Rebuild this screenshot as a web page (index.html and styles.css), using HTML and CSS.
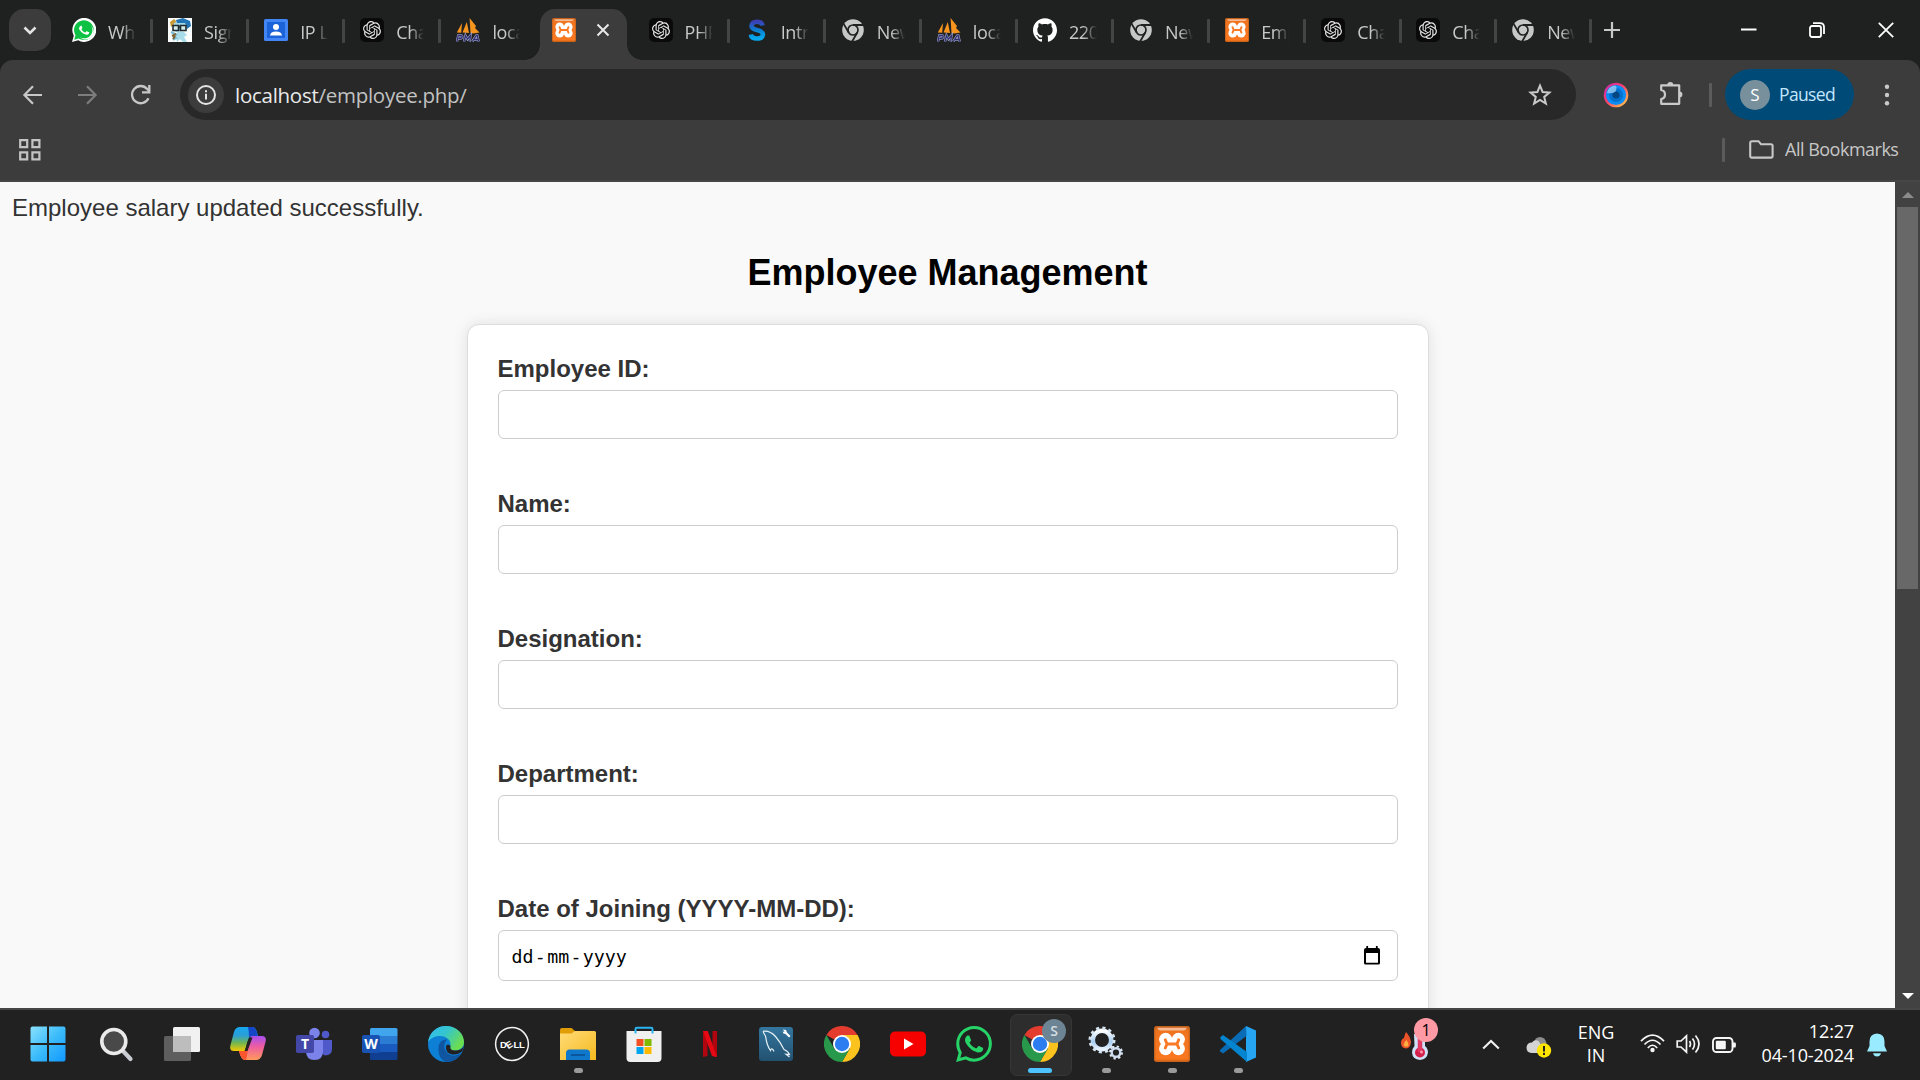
FILE: index.html
```html
<!DOCTYPE html>
<html lang="en">
<head>
<meta charset="utf-8">
<title>Employee Management</title>
<link rel="stylesheet" href="styles.css">
</head>
<body>
<svg class="defs" width="0" height="0" aria-hidden="true">
  <defs>
    <linearGradient id="gx" x1="0" y1="0" x2="0" y2="1"><stop offset="0" stop-color="#b45a18"/><stop offset=".12" stop-color="#ef7420"/><stop offset=".9" stop-color="#f9771f"/><stop offset="1" stop-color="#d9640f"/></linearGradient>
    <linearGradient id="gs" x1="0" y1="0" x2="0" y2="1"><stop offset="0" stop-color="#3b3fb5"/><stop offset=".5" stop-color="#0a80d0"/><stop offset="1" stop-color="#06a9ee"/></linearGradient>
    <linearGradient id="gw" x1="0" y1="0" x2="1" y2="1"><stop offset="0" stop-color="#8be1fd"/><stop offset=".5" stop-color="#3cbcfa"/><stop offset="1" stop-color="#1199ff"/></linearGradient>
    <linearGradient id="gf" x1="0" y1="0" x2="1" y2="1"><stop offset="0" stop-color="#ffdc78"/><stop offset="1" stop-color="#f6b91e"/></linearGradient>
    <linearGradient id="gm" x1="0" y1="0" x2="0" y2="1"><stop offset="0" stop-color="#33769f"/><stop offset="1" stop-color="#225170"/></linearGradient>
    <linearGradient id="gc1" x1="0" y1="0" x2="0" y2="1"><stop offset="0" stop-color="#15a6ee"/><stop offset=".35" stop-color="#2b9fd8"/><stop offset=".65" stop-color="#6db555"/><stop offset="1" stop-color="#f4c900"/></linearGradient>
    <linearGradient id="gc2" x1="0" y1="0" x2="0" y2="1"><stop offset="0" stop-color="#a84ff0"/><stop offset=".45" stop-color="#ef5ea0"/><stop offset="1" stop-color="#ff9a5a"/></linearGradient>
    <linearGradient id="ge" x1="0" y1="0" x2="1" y2=".5"><stop offset="0" stop-color="#35bdf0"/><stop offset=".5" stop-color="#34c5cf"/><stop offset="1" stop-color="#6bdd50"/></linearGradient>
    <linearGradient id="gg" x1="0" y1="0" x2="0" y2="1"><stop offset="0" stop-color="#fff"/><stop offset=".6" stop-color="#a5cdf0"/><stop offset="1" stop-color="#e8f2ff"/></linearGradient>
    <linearGradient id="geye" x1="0" y1="0" x2="1" y2="1"><stop offset="0" stop-color="#c42ab0"/><stop offset=".45" stop-color="#ff3d6a"/><stop offset="1" stop-color="#ffd34a"/></linearGradient>
  </defs>
  <symbol id="whatsapp" viewBox="0 0 24 24"><path d="M17.472 14.382c-.297-.149-1.758-.867-2.03-.967-.273-.099-.471-.148-.67.15-.197.297-.767.966-.94 1.164-.173.199-.347.223-.644.075-.297-.15-1.255-.463-2.39-1.475-.883-.788-1.48-1.761-1.653-2.059-.173-.297-.018-.458.13-.606.134-.133.298-.347.446-.52.149-.174.198-.298.298-.497.099-.198.05-.371-.025-.52-.075-.149-.669-1.612-.916-2.207-.242-.579-.487-.5-.669-.51-.173-.008-.371-.01-.57-.01-.198 0-.52.074-.792.372-.272.297-1.04 1.016-1.04 2.479 0 1.462 1.065 2.875 1.213 3.074.149.198 2.096 3.2 5.077 4.487.709.306 1.262.489 1.694.625.712.227 1.36.195 1.871.118.571-.085 1.758-.719 2.006-1.413.248-.694.248-1.289.173-1.413-.074-.124-.272-.198-.57-.347m-5.421 7.403h-.004a9.87 9.87 0 01-5.031-1.378l-.361-.214-3.741.982.998-3.648-.235-.374a9.86 9.86 0 01-1.51-5.26c.001-5.45 4.436-9.884 9.888-9.884 2.64 0 5.122 1.03 6.988 2.898a9.825 9.825 0 012.893 6.994c-.003 5.45-4.437 9.884-9.885 9.884m8.413-18.297A11.815 11.815 0 0012.05 0C5.495 0 .16 5.335.157 11.892c0 2.096.547 4.142 1.588 5.945L.057 24l6.305-1.654a11.882 11.882 0 005.683 1.448h.005c6.554 0 11.89-5.335 11.893-11.893a11.821 11.821 0 00-3.48-8.413z"/></symbol>
  <symbol id="gpt" viewBox="0 0 24 24"><rect width="24" height="24" rx="5" fill="#0a0a0a"/><path transform="translate(3 3) scale(.75)" fill="#e4e4e4" d="M22.2819 9.8211a5.9847 5.9847 0 0 0-.5157-4.9108 6.0462 6.0462 0 0 0-6.5098-2.9A6.0651 6.0651 0 0 0 4.9807 4.1818a5.9847 5.9847 0 0 0-3.9977 2.9 6.0462 6.0462 0 0 0 .7427 7.0966 5.98 5.98 0 0 0 .511 4.9107 6.051 6.051 0 0 0 6.5146 2.9001A5.9847 5.9847 0 0 0 13.2599 24a6.0557 6.0557 0 0 0 5.7718-4.2058 5.9894 5.9894 0 0 0 3.9977-2.9001 6.0557 6.0557 0 0 0-.7475-7.0729zm-9.022 12.6081a4.4755 4.4755 0 0 1-2.8764-1.0408l.1419-.0804 4.7783-2.7582a.7948.7948 0 0 0 .3927-.6813v-6.7369l2.02 1.1686a.071.071 0 0 1 .038.052v5.5826a4.504 4.504 0 0 1-4.4945 4.4944zm-9.6607-4.1254a4.4708 4.4708 0 0 1-.5346-3.0137l.142.0852 4.783 2.7582a.7712.7712 0 0 0 .7806 0l5.8428-3.3685v2.3324a.0804.0804 0 0 1-.0332.0615L9.74 19.9502a4.4992 4.4992 0 0 1-6.1408-1.6464zM2.3408 7.8956a4.485 4.485 0 0 1 2.3655-1.9728V11.6a.7664.7664 0 0 0 .3879.6765l5.8144 3.3543-2.0201 1.1685a.0757.0757 0 0 1-.071 0l-4.8303-2.7865A4.504 4.504 0 0 1 2.3408 7.872zm16.5963 3.8558L13.1038 8.364 15.1192 7.2a.0757.0757 0 0 1 .071 0l4.8303 2.7913a4.4944 4.4944 0 0 1-.6765 8.1042v-5.6772a.79.79 0 0 0-.407-.667zm2.0107-3.0231l-.142-.0852-4.7735-2.7818a.7759.7759 0 0 0-.7854 0L9.409 9.2297V6.8974a.0662.0662 0 0 1 .0284-.0615l4.8303-2.7866a4.4992 4.4992 0 0 1 6.6802 4.66zM8.3065 12.863l-2.02-1.1638a.0804.0804 0 0 1-.038-.0567V6.0742a4.4992 4.4992 0 0 1 7.3757-3.4537l-.142.0805L8.704 5.459a.7948.7948 0 0 0-.3927.6813zm1.0976-2.3654l2.602-1.4998 2.6069 1.4998v2.9994l-2.5974 1.4997-2.6067-1.4997Z"/></symbol>
  <symbol id="pma" viewBox="0 0 24 24"><path fill="#f7941e" d="M13.6 0 L20 8 L19 10 L23.5 14.5 L17 15.5 L14.5 15Z M10.8 4 L13 15 L6.5 14.6Z M6 5 L5.2 14.8 L.8 14.6Z"/><path d="M1 23.5 2.2 17.500h3q1.600.3.8 1.900T2.500 20.600M8 23.5 9.500 17.500l2 3.700L14.500 17.500l-.8 6M16.300 23.500 20.300 17.500h1l1.400 6M18.300 21.500h3.600" fill="none" stroke="#aeb2dc" stroke-width="2.300"/><path d="M1 23.5 2.2 17.500h3q1.600.3.8 1.900T2.500 20.600M8 23.5 9.500 17.500l2 3.700L14.500 17.500l-.8 6M16.300 23.500 20.300 17.500h1l1.400 6M18.300 21.500h3.600" fill="none" stroke="#30326f" stroke-width="1.300"/></symbol>
  <symbol id="xampp" viewBox="0 0 36 36"><rect width="36" height="36" rx="3" fill="url(#gx)"/><rect x=".7" y=".7" width="34.6" height="34.6" rx="2.5" fill="none" stroke="#c2621c" stroke-width="1.2"/><path d="M3 1.8H33Q32 4.5 29 4.5H7Q4 4.5 3 1.8Z" fill="#f6bb94"/><g fill="#fff"><circle cx="11.600" cy="13.300" r="6.500"/><circle cx="24.400" cy="13.300" r="6.500"/><circle cx="11.600" cy="22.700" r="6.500"/><circle cx="24.400" cy="22.700" r="6.500"/><rect x="7" y="12" width="22" height="12"/></g><path d="M11.300 13.800 13 18 11.300 22M24.700 13.800 23 18 24.700 22M13 18H23" fill="none" stroke="#fb7a25" stroke-width="2.900" stroke-linecap="round"/></symbol>
  <symbol id="newtab" viewBox="0 0 24 24"><circle cx="12" cy="12" r="10.8" fill="#c6c8c7"/><circle cx="12" cy="12" r="5" fill="none" stroke="#202221" stroke-width="1.7"/><path d="M12 7H22.3M7.7 14.5 2.5 5.6M16.3 14.5 11.1 23.5" stroke="#202221" stroke-width="1.8"/></symbol>
  <symbol id="chrome" viewBox="0 0 36 36"><path fill="#e33b2e" d="M18 18 2.4 9A18 18 0 0 1 33.6 9Z"/><path fill="#fcc31e" d="M18 9H33.6A18 18 0 0 1 18 36L25.8 22.5Z"/><path fill="#28994a" d="M18 36A18 18 0 0 1 2.4 9L10.2 22.5 18 27 25.8 22.5Z"/><circle cx="18" cy="18" r="9" fill="#fff"/><circle cx="18" cy="18" r="7.2" fill="#2b7df0"/></symbol>
  <symbol id="github" viewBox="0 0 24 24"><path fill="#fff" d="M12 .297c-6.63 0-12 5.373-12 12 0 5.303 3.438 9.8 8.205 11.385.6.113.82-.258.82-.577 0-.285-.01-1.04-.015-2.04-3.338.724-4.042-1.61-4.042-1.61C4.422 18.07 3.633 17.7 3.633 17.7c-1.087-.744.084-.729.084-.729 1.205.084 1.838 1.236 1.838 1.236 1.07 1.835 2.809 1.305 3.495.998.108-.776.417-1.305.76-1.605-2.665-.3-5.466-1.332-5.466-5.93 0-1.31.465-2.38 1.235-3.22-.135-.303-.54-1.523.105-3.176 0 0 1.005-.322 3.3 1.23.96-.267 1.98-.399 3-.405 1.02.006 2.04.138 3 .405 2.28-1.552 3.285-1.23 3.285-1.23.645 1.653.24 2.873.12 3.176.765.84 1.23 1.91 1.23 3.22 0 4.61-2.805 5.625-5.475 5.92.42.36.81 1.096.81 2.22 0 1.606-.015 2.896-.015 3.286 0 .315.21.69.825.57C20.565 22.092 24 17.592 24 12.297c0-6.627-5.373-12-12-12"/></symbol>
</svg>

<header class="tabstrip">
  <button class="tabsearch" aria-label="Search tabs"><svg width="14" height="9" viewBox="0 0 14 9"><path d="M1.5 1.5 7 7 12.5 1.5" fill="none" stroke="#e3e3e3" stroke-width="2.6"/></svg></button>
  <nav class="tabs">
    <div class="tab"><svg class="fav" viewBox="0 0 24 24"><path d="M0 24 1.8 17.8A12 12 0 1 1 6.2 22.3Z" fill="#fff"/><path d="M2.2 21.8 3.5 17.3A9.9 9.9 0 1 1 6.8 20.6Z" fill="#0cc143"/><use href="#whatsapp" x="1.8" y="1.8" width="20.4" height="20.4" fill="#fff" clip-path="circle(8px at 12px 12px)"/></svg><span>Wh</span></div>
    <div class="tab"><svg class="fav" viewBox="0 0 24 24"><rect width="24" height="24" fill="#fbfdfd"/><path d="M8 2 15 0 22 3 23 8 19 11 17 6 9 6Z" fill="#2375b5"/><path d="M2 4 6 1 8 3 7 7 3 9Z" fill="#c99a38"/><path d="M6 5 17 5 19 9 18 13 8 14 5 11Z" fill="#9fd9ea"/><path d="M5 7.5h5.5v5H5ZM12.5 7.5H18v5h-5.5ZM10.5 9h2" fill="#d4ebec" stroke="#1d292d" stroke-width="1.6"/><path d="M9 14h7l3 3-3 2 3 5h-4l-3-3-3 3-1-5Z" fill="#a9dce9"/><path d="M3 14 9 17M6 18 8 20 5 22" stroke="#78bed8" stroke-width="2"/><path d="M4 18 8 16M5 21 7 18" stroke="#7d6234" stroke-width="2"/></svg><span>Sign</span></div>
    <div class="tab"><svg class="fav" viewBox="0 0 24 24"><rect y="1" width="24" height="22" rx="1.5" fill="#4285f4"/><rect x="3" y="4" width="18" height="16" fill="#1a63d8"/><circle cx="12" cy="9" r="3" fill="#fff"/><path d="M6 17.5Q6.5 13.5 12 13.5T18 17.5Z" fill="#fff"/></svg><span>IP L</span></div>
    <div class="tab"><svg class="fav"><use href="#gpt"/></svg><span>Cha</span></div>
    <div class="tab nosep"><svg class="fav"><use href="#pma"/></svg><span>loca</span></div>
    <div class="tab active nosep"><svg class="fav"><use href="#xampp"/></svg><svg class="close" width="14" height="14" viewBox="0 0 14 14"><path d="M1.5 1.5 12.5 12.5M12.5 1.5 1.5 12.5" stroke="#e8e8e8" stroke-width="2"/></svg></div>
    <div class="tab"><svg class="fav"><use href="#gpt"/></svg><span>PHP</span></div>
    <div class="tab"><svg class="fav" viewBox="0 0 24 24"><path d="M17.5 7.5Q17 3.8 12 3.8T6.5 7.8Q6.5 10.8 12 12T18 16.5Q17.5 20.5 12 20.5T5.8 16.5" fill="none" stroke="url(#gs)" stroke-width="4.6"/></svg><span>Intr</span></div>
    <div class="tab"><svg class="fav"><use href="#newtab"/></svg><span>New</span></div>
    <div class="tab"><svg class="fav"><use href="#pma"/></svg><span>loca</span></div>
    <div class="tab"><svg class="fav"><use href="#github"/></svg><span>220</span></div>
    <div class="tab"><svg class="fav"><use href="#newtab"/></svg><span>New</span></div>
    <div class="tab"><svg class="fav"><use href="#xampp"/></svg><span>Emp</span></div>
    <div class="tab late"><svg class="fav"><use href="#gpt"/></svg><span>Cha</span></div>
    <div class="tab late"><svg class="fav"><use href="#gpt"/></svg><span>Cha</span></div>
    <div class="tab late"><svg class="fav"><use href="#newtab"/></svg><span>New</span></div>
  </nav>
  <svg class="plus" width="16" height="16" viewBox="0 0 16 16"><path d="M8 0V16M0 8H16" stroke="#c8c8c8" stroke-width="2.2"/></svg>
  <div class="winbtns">
    <svg width="16" height="16" viewBox="0 0 16 16"><path d="M0 7.5H15.5" stroke="#fff" stroke-width="2"/></svg>
    <svg width="16" height="16" viewBox="0 0 16 16"><rect x="1" y="4" width="11" height="11" rx="2" fill="none" stroke="#fff" stroke-width="1.8"/><path d="M4 1.2H11Q15 1.2 15 5V12" fill="none" stroke="#fff" stroke-width="1.8"/></svg>
    <svg width="16" height="16" viewBox="0 0 16 16"><path d="M.8.8 15.2 15.2M15.2.8.8 15.2" stroke="#fff" stroke-width="1.8"/></svg>
  </div>
</header>

<div class="chromebar">
  <div class="toolbar">
    <svg class="nav" viewBox="0 0 24 24"><path d="M21 12H4M12 3.2 3.4 12 12 20.8" fill="none" stroke="#c7c7c7" stroke-width="2.2"/></svg>
    <svg class="nav" viewBox="0 0 24 24"><path d="M3 12H20M12 3.2 20.6 12 12 20.8" fill="none" stroke="#7d7d7d" stroke-width="2.2"/></svg>
    <svg class="nav" viewBox="0 0 24 24"><path d="M19.5 15.2A8.6 8.6 0 1 1 18.2 6L20.4 8.6" fill="none" stroke="#c7c7c7" stroke-width="2.3"/><path d="M20.3 2V9.3H13" fill="none" stroke="#c7c7c7" stroke-width="2.3"/></svg>
    <div class="omnibox">
      <div class="chip"><svg width="22" height="22" viewBox="0 0 22 22"><circle cx="11" cy="11" r="9" fill="none" stroke="#e3e3e3" stroke-width="2"/><path d="M11 9.8V15.6M11 6.2V8.2" stroke="#e3e3e3" stroke-width="2"/></svg></div>
      <div class="url"><b>localhost</b>/employee.php/</div>
      <svg class="star" width="24" height="24" viewBox="0 0 24 24"><path d="M12 2.6 14.6 9 21.4 9.5 16.2 13.9 17.9 20.7 12 17 6.1 20.7 7.8 13.9 2.6 9.5 9.4 9Z" fill="none" stroke="#c9c9c9" stroke-width="2"/></svg>
    </div>
    <svg class="ext" viewBox="0 0 26 26"><circle cx="13" cy="13" r="11.2" fill="#0a8df5" stroke="url(#geye)" stroke-width="2.2"/><circle cx="13" cy="13" r="7" fill="#0570cd"/><circle cx="13" cy="13" r="3.6" fill="#044682"/><path d="M4 11A9.4 9.4 0 0 1 12 3.6Q14.5 5 13 8.5T4 11Z" fill="#9ccdf2" opacity=".8"/></svg>
    <svg class="puzzle" viewBox="0 0 26 26"><path d="M2.2 4.3H20.2V22.8H2.2V18Q6 17.3 6 13.5T2.2 9Z" fill="none" stroke="#c9c9c9" stroke-width="2.2" stroke-linejoin="round"/><path d="M8.3 4A3 3 0 0 1 14.3 4ZM20.4 10.5A3 3 0 0 1 20.4 16.5Z" fill="#c9c9c9"/></svg>
    <i class="bar"></i>
    <div class="profile"><span class="avatar">S</span><span class="paused">Paused</span></div>
    <svg class="dots" width="6" height="22" viewBox="0 0 6 22"><g fill="#c9c9c9"><circle cx="3" cy="2.7" r="2.2"/><circle cx="3" cy="11" r="2.2"/><circle cx="3" cy="19.3" r="2.2"/></g></svg>
  </div>
  <div class="bookmarks">
    <svg width="22" height="22" viewBox="0 0 22 22"><g fill="none" stroke="#c4c4c4" stroke-width="2.2"><path d="M1.2 1.2H8.2V8.2H1.2ZM13.4 1.2H20.4V8.2H13.4ZM1.2 13.4H8.2V20.4H1.2ZM13.4 13.4H20.4V20.4H13.4Z"/></g></svg>
    <i class="bar"></i>
    <svg class="folder" width="25" height="19" viewBox="0 0 25 19"><path d="M3 1.2H9.5L12 4.2H22Q23.6 4.2 23.6 5.8V16Q23.6 17.6 22 17.6H2.8Q1.2 17.6 1.2 16V3Q1.2 1.2 3 1.2Z" fill="none" stroke="#c7c7c7" stroke-width="2.1"/></svg>
    <span class="all">All Bookmarks</span>
  </div>
</div>

<div class="viewport">
  <main class="page">
    <div class="message">Employee salary updated successfully.</div>
    <h2>Employee Management</h2>
    <form class="card">
      <label for="eid">Employee ID:</label><input id="eid" type="text">
      <label for="name">Name:</label><input id="name" type="text">
      <label for="des">Designation:</label><input id="des" type="text">
      <label for="dep">Department:</label><input id="dep" type="text">
      <label>Date of Joining (YYYY-MM-DD):</label>
      <div class="date"><span class="dmy"><span>dd</span><span>-</span><span>mm</span><span>-</span><span>yyyy</span></span><svg width="18" height="19" viewBox="0 0 18 19"><path d="M1 4Q1 2 3 2H15Q17 2 17 4V17Q17 18.5 15.5 18.5H2.5Q1 18.5 1 17ZM3 7V16.7H15V7Z" fill="#000" fill-rule="evenodd"/><path d="M4.2 0V3M13.8 0V3" stroke="#000" stroke-width="1.8"/></svg></div>
    </form>
  </main>
  <aside class="scroll">
    <i class="up"></i><i class="thumb"></i><i class="down"></i>
  </aside>
</div>

<footer class="taskbar">
  <div class="apps">
    <div class="app start"><svg viewBox="0 0 36 36"><g fill="url(#gw)"><path d="M.5 2.5Q.5.5 2.5.5H17V17H.5ZM19 .5H33.5Q35.5.5 35.5 2.5V17H19ZM.5 19H17V35.5H2.5Q.5 35.5.5 33.5ZM19 19H35.5V33.5Q35.5 35.5 33.5 35.5H19Z"/></g></svg></div>
    <div class="app"><svg viewBox="0 0 36 36"><path d="M25.5 25.5 32.5 33" stroke="#c9ccd2" stroke-width="4.2" stroke-linecap="round"/><circle cx="15.8" cy="15.5" r="12" fill="#494949" stroke="#eaeaea" stroke-width="3.6"/></svg></div>
    <div class="app"><svg viewBox="0 0 36 36"><rect x="9" y="1" width="27" height="25" rx="1.5" fill="#f1f1f1"/><rect x="0" y="10" width="27" height="25" rx="1.5" fill="#5e5e5e"/><rect x="9" y="10" width="18" height="16" fill="#bdbdbd"/></svg></div>
    <div class="app"><svg viewBox="0 0 36 36"><path d="M10 1H23Q26 1 28 10H22Q19 10 17 17L15 25H4Q-1 25 .5 19L4 6Q5.5 1 10 1Z" fill="url(#gc1)"/><path d="M18 1H23Q26 1 27.8 10H23Q20 10 19 12Q19 5 18 1Z" fill="#1546c8"/><path d="M26 34H15Q11 34 9 25H14Q17 25 19 18L21 10H32Q37 10 35.5 16L32 29Q30.5 34 26 34Z" fill="url(#gc2)"/><path d="M9 25H14Q17 25 18 22 17 31 16 34 11 34 9 25Z" fill="#f9562f"/><path d="M19 11.5H22.5L17.5 25H14.5Q17 19 19 11.5Z" fill="#222"/></svg></div>
    <div class="app"><svg viewBox="0 0 36 36"><circle cx="29.5" cy="8.5" r="3.8" fill="#5059c9"/><path d="M24 14H36V23Q36 29 29 29.5L25 27Z" fill="#5059c9"/><circle cx="18.5" cy="7" r="5.3" fill="#7b83eb"/><path d="M10 14H27V25Q27 34 18.5 34T10 25Z" fill="#7b83eb"/><rect x="0" y="9" width="18" height="18" rx="1.8" fill="#4247a8"/><text x="9" y="23" text-anchor="middle" class="mark">T</text></svg></div>
    <div class="app"><svg viewBox="0 0 36 36"><path d="M9.5 2H34Q35.5 2 35.5 3.500V10H8V3.500Q8 2 9.500 2Z" fill="#41a5ee"/><path d="M8 10H35.500V18H8Z" fill="#2b7cd3"/><path d="M8 18H35.500V26H8Z" fill="#185abd"/><path d="M8 26H35.500V32.500Q35.500 34 34 34H9.500Q8 34 8 32.500Z" fill="#103f91"/><rect x="0" y="9" width="18" height="18" rx="1.8" fill="#1853b4"/><text x="9" y="23" text-anchor="middle" class="mark">W</text></svg></div>
    <div class="app"><svg viewBox="0 0 36 36"><circle cx="18" cy="18" r="18" fill="#0d7fd4"/><path d="M0 17C1 6 9 0 18 0 28 0 36 7 36 16 36 22 31 25 26 24.500 22 24 21 22.500 22.500 20 23.500 14 18 9.500 11 10 5 10.500 1.500 13 0 17Z" fill="url(#ge)"/><path d="M10.500 24C10 17 14 13 19 13.500 13 20 18 30 26 29.500 29 29.500 31 28.500 33.500 27 30 33.500 24 36 18.500 36 14 35 10.500 30 10.500 24Z" fill="#0f55a0"/><path d="M22.500 20Q19.500 17 18 20 17 27 24.500 28.500 30 29 34 25.500L36 20Q33 25 26 24.500 21.500 24 22.500 20Z" fill="#212121"/></svg></div>
    <div class="app"><svg viewBox="0 0 36 36"><circle cx="18" cy="18" r="16.400" fill="none" stroke="#f2f2f2" stroke-width="1.500"/><text x="9.500" y="21.800" text-anchor="middle" class="dell">D</text><text transform="translate(17 21.500) rotate(-32)" text-anchor="middle" class="dell">E</text><text x="22.500" y="21.800" text-anchor="middle" class="dell">L</text><text x="28" y="21.800" text-anchor="middle" class="dell">L</text></svg></div>
    <div class="app"><svg viewBox="0 0 36 36"><path d="M0 4Q0 2 2 2H11.500L15 5V9H0Z" fill="#e09d08"/><path d="M0 7.500H11.500L15 5H34.500Q36 5 36 6.500V34H0Z" fill="url(#gf)"/><path d="M6 34V27Q6 23.500 9.500 23.500H26.500Q30 23.500 30 27V34Z" fill="#0f78cb"/><path d="M11 29H25" stroke="#0a4d90" stroke-width="1.600"/></svg><i class="run"></i></div>
    <div class="app store"><svg viewBox="0 0 36 36"><path d="M9.500 8V3Q9.500 1.800 10.700 1.800H25.300Q26.500 1.800 26.500 3V8" fill="none" stroke="#2ab4f1" stroke-width="2"/><path d="M.500 5H35.500V32Q35.500 36 31.500 36H4.500Q.500 36 .500 32Z" fill="#f0f0f0"/><path d="M9.500 5V7.500M26.500 5V7.500" stroke="#2ab4f1" stroke-width="2"/><path d="M10.500 13H17.500V20H10.500Z" fill="#f25022"/><path d="M18.500 13H25.500V20H18.500Z" fill="#7fba00"/><path d="M10.500 21H17.500V28H10.500Z" fill="#00a4ef"/><path d="M18.500 21H25.500V28H18.500Z" fill="#ffb900"/></svg></div>
    <div class="app"><svg viewBox="0 0 36 36"><path d="M11 5H15.500V30L11 31ZM20.500 5H25V31L20.500 30Z" fill="#b1060f"/><path d="M11 5H15.800L25 31 20 30Z" fill="#e50914"/></svg></div>
    <div class="app"><svg viewBox="0 0 36 36"><rect x="1" y="1" width="34" height="34" rx="3" fill="url(#gm)"/><path d="M16 25.500C14.500 22 13 22.500 12.500 24.500 8.500 19 8.500 14.500 7.500 10 5 6.500 5 5 6 5.200 10 5 14 6.500 17.500 10.500 21.500 15 24 19.500 26 23.500 28.500 24.500 30.500 26 31.500 28.500L28 28.200 31.500 31" fill="none" stroke="#e6f0f5" stroke-width="1.200"/><path d="M25 3.500 28 4 29 6.500 32.500 10 31 11.500 27.500 8 25.500 7.500 24.500 5.500 26.500 6Z" fill="#fff"/></svg></div>
    <div class="app"><svg><use href="#chrome"/></svg></div>
    <div class="app"><svg viewBox="0 0 36 36"><rect x="0" y="5.500" width="36" height="25" rx="5" fill="#f60000"/><path d="M14 12.500 23.500 18 14 23.500Z" fill="#fff"/></svg></div>
    <div class="app"><svg fill="#25d366"><use href="#whatsapp"/></svg></div>
    <div class="app current"><svg><use href="#chrome"/></svg><b class="badge">S</b><i class="run wide"></i></div>
    <div class="app"><svg viewBox="0 0 36 36"><circle cx="14" cy="14" r="9.200" fill="none" stroke="url(#gg)" stroke-width="4.500"/><circle cx="14" cy="14" r="12" fill="none" stroke="#d4e4f0" stroke-width="3" stroke-dasharray="3.100 3.183"/><circle cx="28" cy="26.500" r="4.300" fill="none" stroke="#cfdcf0" stroke-width="2.400"/><circle cx="28" cy="26.500" r="6" fill="none" stroke="#dde8f5" stroke-width="2" stroke-dasharray="2.300 2.400"/></svg><i class="run"></i></div>
    <div class="app"><svg><use href="#xampp"/></svg><i class="run"></i></div>
    <div class="app"><svg viewBox="0 0 36 36"><path d="M26 0 36 4.500V31.500L26 36Z" fill="#25a5f2"/><path d="M26 0 0 24V25.500L3 27.500 26.500 10Z" fill="#0a6cb4"/><path d="M0 11.500 3 9 27 26V36L1 13.500Z" fill="#0585cf"/></svg><i class="run"></i></div>
  </div>
  <div class="weather"><svg width="40" height="46" viewBox="0 0 40 46"><path d="M6 14Q10 18 11 24 10.500 30 6 30.500 1 30 1 25 1 21 4 20 4.500 17 6 14Z" fill="#ec5329"/><path d="M6.500 22Q9 25 8.500 28 5 30 3.500 27 4 24 6.500 22Z" fill="#ffae42"/><path d="M14 16H25V28Q28 30.500 28 34.500 27 41.500 20 42 12.500 41.500 12 34.500 12 30.500 14.500 28Z" fill="#cfe0f7"/><circle cx="20" cy="34.500" r="5" fill="#d51f4c"/><path d="M20 20V34" stroke="#e23a62" stroke-width="4.500"/><circle cx="21.500" cy="34" r="1.500" fill="#ff97ad"/></svg><b>1</b></div>
  <svg class="caret" width="18" height="11" viewBox="0 0 18 11"><path d="M1.200 9.500 9 2 16.800 9.500" fill="none" stroke="#f2f2f2" stroke-width="2.100"/></svg>
  <svg class="cloud" width="26" height="24" viewBox="0 0 26 24"><path d="M8 8Q9 2 14 2 19 2 20.500 8L18 13Z" fill="#8d8d8d"/><path d="M5.500 18Q.5 17.500.5 12.500 1 7.500 6 7.500 9 3.500 13 6.500 15 9 14.500 12L13 18Z" fill="#d4d4d4"/><circle cx="18" cy="15.500" r="7.200" fill="#ffe400"/><path d="M18 11V16.500M18 17.800V20" stroke="#222" stroke-width="2"/></svg>
  <div class="lang"><span>ENG</span><span>IN</span></div>
  <svg class="wifi" width="25" height="19" viewBox="0 0 25 19"><g fill="none" stroke="#f5f5f5" stroke-width="1.700"><path d="M1 7.200Q12.500-5 24 7.200M4.500 10.500Q12.500 2 20.500 10.500M7.800 14Q12.500 8.500 17.200 14"/></g><circle cx="12.500" cy="16" r="2.200" fill="#f5f5f5"/></svg>
  <svg class="vol" width="25" height="20" viewBox="0 0 25 20"><g fill="none" stroke="#f5f5f5" stroke-width="1.700"><path d="M1.200 7H5L10.500 1.800V18.200L5 13H1.200ZM13.500 7Q15.500 10 13.500 13M16.500 4.500Q20.500 10 16.500 15.500M19.500 1.500Q26.500 10 19.500 18.500"/></g></svg>
  <svg class="batt" width="25" height="16" viewBox="0 0 25 16"><rect x="1" y="1" width="19.500" height="14" rx="3.500" fill="none" stroke="#f5f5f5" stroke-width="1.900"/><rect x="3.800" y="3.700" width="10" height="8.600" rx="1" fill="#f5f5f5"/><path d="M21 5.500H23.500Q24.500 8 23.500 10.500H21" fill="#f5f5f5"/></svg>
  <div class="clock"><span>12:27</span><span>04-10-2024</span></div>
  <svg class="bell" width="20" height="24" viewBox="0 0 20 24"><path d="M10 .500Q17.500 1 17.500 8.500V13L20 18.500H0L2.500 13V8.500Q2.500 1 10 .500ZM6 20.200H14Q13 23.500 10 23.500T6 20.200Z" fill="#99ebff"/></svg>
</footer>
</body>
</html>
```
FILE: styles.css
```css
* { box-sizing: border-box; }
body {
  margin: 0;
  width: 1920px;
  height: 1080px;
  overflow: hidden;
  display: flex;
  flex-direction: column;
  background: #1f2120;
  font-family: "Open Sans", "Noto Sans", sans-serif;
}
svg { display: block; flex: none; }
.defs { position: absolute; }

/* Tab strip */
.tabstrip { display: flex; height: 60px; flex: none; }
.tabsearch {
  width: 42px; height: 42px; margin: 9px 9px 0; padding: 0;
  border: 0; border-radius: 15px; background: #3c3c3c;
  display: flex; align-items: center; justify-content: center;
}
.tabs { display: flex; }
.tab {
  position: relative;
  width: 96.1px; height: 51px; margin-top: 9px; padding: 9px 0 0 12px;
  display: flex; color: #c7c9c8; font-size: 18px;
}
.tab.late { width: 95px; }
.fav { width: 24px; height: 24px; margin-right: 12px; }
.tab span {
  width: 28px; height: 28px; overflow: hidden; white-space: nowrap;
  line-height: 28px; letter-spacing: -0.4px;
  -webkit-mask-image: linear-gradient(90deg, #000 50%, transparent);
  mask-image: linear-gradient(90deg, #000 50%, transparent);
}
.tab::after {
  content: ""; width: 3px; height: 24px; margin: 1px 0 0 14px;
  border-radius: 1px; background: #434544;
}
.tab.nosep::after { display: none; }
.tab.active {
  width: 87px; margin-right: 9.1px;
  border-radius: 15px 15px 0 0; background: #3c3c3c;
}
.tab.active::before, .tab.active::after {
  content: ""; display: block; position: absolute; bottom: 0;
  width: 15px; height: 15px; margin: 0; border-radius: 0;
}
.tab.active::before { left: -15px; background: radial-gradient(circle at 0 0, transparent 14.5px, #3c3c3c 15px); }
.tab.active::after { right: -15px; background: radial-gradient(circle at 100% 0, transparent 14.5px, #3c3c3c 15px); }
.close { margin: 5px 0 0 8px; }
.plus { margin: 22px 0 0 10px; }
.winbtns { display: flex; gap: 52.5px; margin: 21.5px 26.5px 0 auto; }

/* Toolbar */
.chromebar {
  height: 122px; flex: none; background: #3c3c3c;
  border-bottom: 2px solid #464646; border-radius: 13px 13px 0 0;
}
.toolbar { display: flex; align-items: center; height: 69px; padding-left: 21px; }
.nav { width: 24px; height: 24px; margin-right: 30px; }
.omnibox {
  width: 1396px; height: 51px; margin-left: -3px; padding: 0 24px 0 8px;
  border-radius: 26px; background: #282828;
  display: flex; align-items: center;
}
.chip {
  width: 36px; height: 36px; border-radius: 50%; background: #3c3c3c;
  display: flex; align-items: center; justify-content: center;
}
.url {
  margin-left: 11px; font-size: 20.5px; line-height: 30px; letter-spacing: -0.27px;
  color: #c2c2c2; white-space: nowrap;
}
.url b { font-weight: 400; color: #eaeaea; }
.star { margin-left: auto; }
.ext { width: 26px; height: 26px; margin-left: 27px; }
.puzzle { width: 26px; height: 26px; margin: -2px 0 0 30px; }
.bar { flex: none; width: 3px; height: 24px; border-radius: 1px; background: #5b5b5b; }
.toolbar .bar { margin-left: 24px; }
.profile {
  width: 129px; height: 51px; margin-left: 13px; padding-left: 15px;
  border-radius: 26px; background: #004a77;
  display: flex; align-items: center;
}
.avatar {
  width: 30px; height: 30px; border-radius: 50%; background: #78909c; color: #fff;
  font-size: 17px; line-height: 30px; text-align: center;
}
.paused { margin: -1px 0 0 9px; font-size: 17.5px; letter-spacing: -0.65px; color: #c2e7ff; }
.dots { margin-left: 30px; }
.bookmarks { display: flex; align-items: center; height: 41px; padding-left: 19px; }
.bookmarks .bar { margin-left: 1681px; }
.folder { margin-left: 24px; }
.all { margin: -2px 0 0 11px; font-size: 18px; letter-spacing: -0.5px; color: #c7c7c7; white-space: nowrap; }

/* Page */
.viewport { display: flex; height: 826px; flex: none; }
.page {
  width: 1895px; height: 826px; padding: 12px; overflow: hidden;
  background: #f9f9f9; font: 24px/27px "Liberation Sans", Arial, sans-serif;
}
.message { color: #333; }
h2 { margin: 31px 0 30px; font-size: 36px; line-height: 42px; text-align: center; color: #000; }
.card {
  width: 962px; margin: 0 auto; height: 900px; padding: 30px;
  background: #fff; border: 1px solid #ddd; border-radius: 12px;
  box-shadow: 0 0 15px rgba(0, 0, 0, .1);
}
.card label { display: block; margin-bottom: 8px; font-weight: 700; color: #333; }
.card input, .date {
  display: block; width: 100%; height: 49px; margin: 0 0 51px; padding: 12px;
  border: 1px solid #ccc; border-radius: 6px; background: #fff;
}
.date { display: flex; align-items: center; justify-content: space-between; height: 51px; padding: 0 16px 0 13px; }
.dmy { display: flex; gap: 1.3px; font: 18.3px/24px "DejaVu Sans Mono", monospace; color: #000; margin-top: 3px; }

/* Scrollbar */
.scroll { width: 25px; background: #424242; display: flex; flex-direction: column; align-items: center; }
.up { border: 6px solid transparent; border-top: 0; border-bottom: 6px solid #8b8b8b; margin-top: 10px; }
.thumb { width: 21px; height: 382px; margin-top: 9px; background: #686868; }
.down { border: 6px solid transparent; border-bottom: 0; border-top: 6px solid #fff; margin: auto 0 9px; }

/* Taskbar */
.taskbar {
  flex: 1; display: flex; align-items: flex-start;
  background: #212121; border-top: 2px solid #464646; color: #fff;
}
.apps { display: flex; padding-left: 17px; }
.app { position: relative; width: 66px; height: 70px; padding: 16px 15px 0; }
.app.start { padding-left: 13px; }
.app.store { padding-left: 14.5px; }
.app svg { width: 36px; height: 36px; }
.mark { font: 700 14px "Open Sans", sans-serif; fill: #fff; }
.dell { font: 700 9.5px "Liberation Sans", sans-serif; fill: #fff; }
.run {
  position: absolute; left: 28.5px; bottom: 7px; width: 9px; height: 5px;
  border-radius: 3px; background: #9a9a9a;
}
.run.wide { left: 21px; width: 24px; background: #4cc2ff; }
.current::before {
  content: ""; position: absolute; left: 3px; top: 4px; width: 60px; height: 60px;
  border-radius: 7px; background: #2d2d2d; border: 1px solid #363636;
}
.current svg { position: relative; }
.badge {
  position: absolute; left: 35px; top: 9px; width: 24px; height: 24px; border-radius: 50%;
  background: #6c8493; color: #d5dde2; font-size: 14px; font-weight: 600; line-height: 24px; text-align: center;
}
.weather { position: relative; margin: 8px 0 0 129px; }
.weather b {
  position: absolute; left: 14px; top: 0; width: 24px; height: 24px; border-radius: 50%;
  background: #ff99a4; color: #000; font-weight: 400; font-size: 16px; line-height: 24px; text-align: center;
}
.caret { margin: 29px 0 0 42px; }
.cloud { margin: 25px 0 0 26px; }
.lang { margin-left: 24px; width: 40px; text-align: center; }
.lang, .clock { margin-top: 11px; display: flex; flex-direction: column; font-size: 18px; line-height: 23px; white-space: nowrap; }
.wifi { margin: 24px 0 0 24px; }
.vol { margin: 24px 0 0 11px; }
.batt { margin: 27px 0 0 11px; }
.clock {
  margin: 9px 0 0 18px; width: 99px; align-items: flex-end;
  line-height: 24px; letter-spacing: -0.15px;
}
.bell { margin: 23px 0 0 13px; }
```
